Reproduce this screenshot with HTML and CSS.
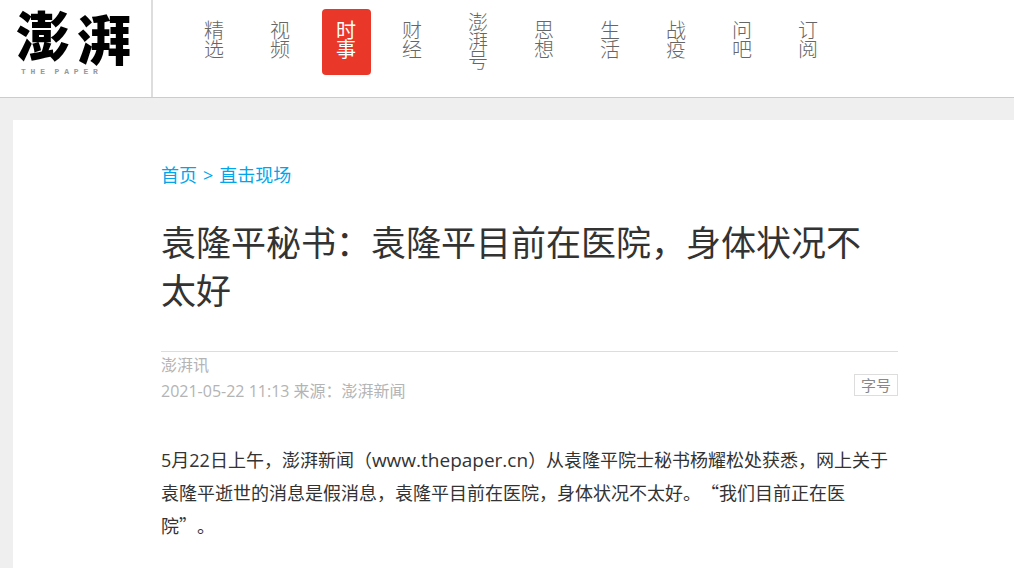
FILE: index.html
```
<!DOCTYPE html>
<html lang="zh-CN">
<head>
    <meta charset="UTF-8">
    <meta name="viewport" content="width=device-width, initial-scale=1.0">
    <title>袁隆平秘书：袁隆平目前在医院，身体状况不太好</title>
    <link rel="stylesheet" href="styles.css">
</head>
<body>

    <!-- Header -->
    <header class="header">
        <a class="logo" href="/" aria-label="澎湃 The Paper">
            <svg width="136" height="90" viewBox="0 0 136 90">
                <text class="logo-name" x="16" y="57">澎</text>
                <text class="logo-name" x="77" y="61">湃</text>
                <text class="logo-sub" x="21" y="74">T H E&#160; P A P E R</text>
            </svg>
        </a>
        <nav class="nav">
            <a href="/featured">精选</a>
            <a href="/video">视频</a>
            <a class="active" href="/news">时事</a>
            <a href="/finance">财经</a>
            <a class="long" href="/pph">澎湃号</a>
            <a href="/ideas">思想</a>
            <a href="/life">生活</a>
            <a href="/covid">战疫</a>
            <a href="/ask">问吧</a>
            <a href="/subscribe">订阅</a>
        </nav>
    </header>

    <!-- Article -->
    <main class="article">
        <div class="crumbs">
            <a href="/">首页</a>
            <span>&gt;</span>
            <a href="/live">直击现场</a>
        </div>

        <h1>袁隆平秘书：袁隆平目前在医院，身体状况不太好</h1>

        <div class="about">
            <div>
                <p>澎湃讯</p>
                <p>2021-05-22 11:13 来源：澎湃新闻</p>
            </div>
            <button type="button">字号</button>
        </div>

        <p class="text">5月22日上午，澎湃新闻（<span class="site">www.thepaper.cn</span>）从袁隆平院士秘书杨耀松处获悉，网上关于袁隆平逝世的消息是假消息，袁隆平目前在医院，身体状况不太好。<span class="quote">“</span>我们目前正在医院<span class="quote">”</span>。</p>
    </main>

</body>
</html>
```
FILE: styles.css
```
* {
    margin: 0;
    padding: 0;
    box-sizing: border-box;
}

body {
    font-family: "Open Sans", "Noto Sans CJK SC", sans-serif;
    background-color: #efefef;
    color: #333;
    min-height: 100vh;
    display: flex;
    flex-direction: column;
    text-spacing-trim: space-all;
}

a {
    text-decoration: none;
}

/* Header */
.header {
    display: flex;
    background-color: #fff;
    border-bottom: 1px solid #ccc;
}

.logo {
    padding: 0 15px 7px 0;
    border-right: 2px solid #ddd;
}

.logo svg {
    display: block;
    overflow: visible;
}

.logo-name {
    font-family: "Noto Sans CJK SC", sans-serif;
    font-size: 54px;
    font-weight: 900;
    fill: #000;
}

.logo-sub {
    font-family: "Liberation Mono", monospace;
    font-size: 8px;
    font-weight: 700;
    fill: #999;
}

/* Each nav label is stacked, one character per line */
.nav {
    display: flex;
    gap: 17px;
    padding: 9px 0 0 37px;
}

.nav a {
    width: 49px;
    height: 66px;
    padding: 11px 14px 0;
    border-radius: 4px;
    color: #666;
    font-family: "Noto Sans CJK SC", sans-serif;
    font-size: 20px;
    font-weight: 300;
    line-height: 19px;
    word-break: break-all;
}

.nav a.long {
    padding-top: 3px;
}

.nav a.active {
    background-color: #e93829;
    color: #fff;
    font-weight: 400;
}

/* Article */
.article {
    flex-grow: 1;
    margin: 22px 0 0 13px;
    padding: 40px 116px 24px 148px;
    background-color: #fff;
}

.crumbs {
    display: flex;
    gap: 6px;
    color: #00a5eb;
    font-size: 18px;
    line-height: 30px;
}

.crumbs a {
    color: #00a5eb;
}

h1 {
    margin-top: 29px;
    padding-right: 24px;
    font-size: 35px;
    font-weight: 400;
    line-height: 48px;
}

.about {
    display: flex;
    justify-content: space-between;
    align-items: flex-end;
    margin-top: 36px;
    padding-bottom: 8px;
    border-top: 1px solid #ddd;
    color: #b4b4b4;
    font-size: 16px;
    line-height: 26px;
}

.about button {
    margin-bottom: 8px;
    padding: 0 6px;
    border: 1px solid #ddd;
    background-color: #fff;
    color: #888;
    font-family: inherit;
    font-size: 15px;
    line-height: 20px;
}

.text {
    margin-top: 32px;
    padding-right: 8px;
    font-size: 18px;
    line-height: 33px;
}

.site {
    font-size: 19px;
    line-height: 1;
}

/* Full-width quotation marks */
.quote {
    font-family: "Noto Sans CJK SC", sans-serif;
    line-height: 1;
}
```
